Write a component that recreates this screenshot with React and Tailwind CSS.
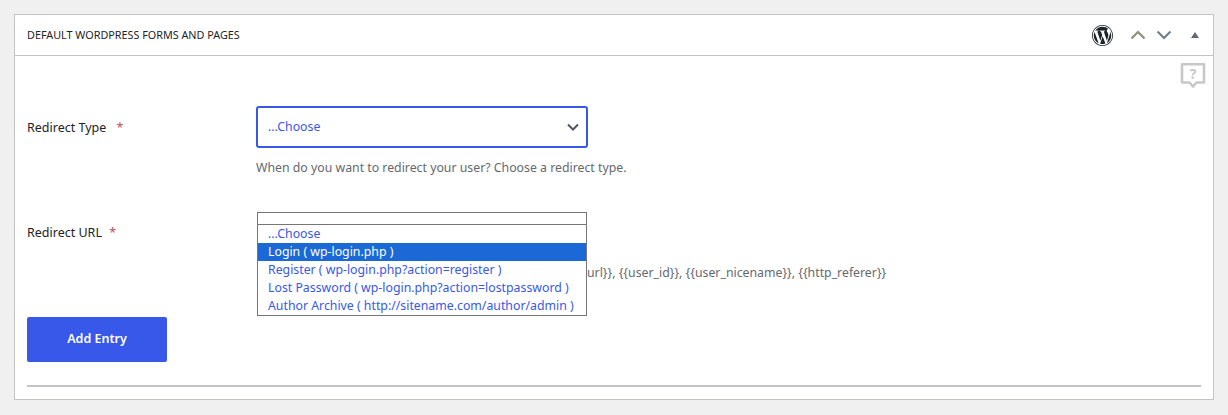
const options = [
  "...Choose",
  "Login ( wp-login.php )",
  "Register ( wp-login.php?action=register )",
  "Lost Password ( wp-login.php?action=lostpassword )",
  "Author Archive ( http://sitename.com/author/admin )",
];

function WpLogo() {
  return (
    <svg width="21" height="21" viewBox="0 0 24 24" fill="#1d2327">
      <path d="M12 0C5.4 0 0 5.4 0 12s5.4 12 12 12 12-5.4 12-12S18.6 0 12 0zm0 23.1C5.9 23.1.9 18.1.9 12S5.9.9 12 .9 23.1 5.9 23.1 12 18.1 23.1 12 23.1z" />
      <path d="M2 12c0 4 2.300 7.400 5.700 9L2.900 7.900C2.300 9.100 2 10.500 2 12zm16.700-.5c0-1.200-.4-2.100-.8-2.700-.5-.8-1-1.500-1-2.300 0-.9.7-1.800 1.700-1.800h.1C16.900 3 14.600 2 12 2 8.500 2 5.500 3.800 3.700 6.500h.6c1 0 2.700-.1 2.700-.1.500 0 .6.800.1.800 0 0-.5.1-1.100.1l3.600 10.600 2.100-6.400-1.500-4.200c-.5 0-1-.1-1-.1-.5 0-.5-.8 0-.8 0 0 1.600.1 2.600.1s2.700-.1 2.700-.1c.5 0 .6.800.1.800 0 0-.6.1-1.100.1l3.500 10.600 1-3.300c.4-1.300.7-2.200.7-3zM12.200 12.900l-2.900 8.500c.9.300 1.800.4 2.800.4 1.100 0 2.200-.2 3.300-.6l-.1-.1-3.100-8.200zm8.500-5.600c0 .3.100.7.100 1.100 0 1-.2 2.200-.8 3.600l-3 8.800c3-1.700 5-5 5-8.800 0-1.700-.5-3.300-1.300-4.700z" />
    </svg>
  );
}

function HelpBubble() {
  return (
    <svg width="26" height="26" viewBox="0 0 26 26" fill="none">
      <path d="M2 2.200h22v18.300h-7.500L13 24.500l-3.500-4H2z" stroke="#c8c8c8" strokeWidth="2.600" strokeLinejoin="round" />
      <text x="13" y="16.500" textAnchor="middle" fontSize="14" fontWeight="700" fontFamily="Noto Sans, sans-serif" fill="#c8c8c8">?</text>
    </svg>
  );
}

export default function App() {
  return (
    <div className="min-h-[415px] bg-[#f0f0f1] px-[14px] pt-[14px] font-['Noto_Sans',sans-serif] text-[#1d2327]">
      <div className="h-[386px] border border-[#c3c4c7] bg-white">
        <div className="flex h-[41px] items-center justify-between border-b border-[#c3c4c7] pl-3 pr-[14px]">
          <h2 className="text-[10.8px] leading-none">DEFAULT WORDPRESS FORMS AND PAGES</h2>
          <div className="flex items-center">
            <WpLogo />
            <svg className="ml-[17px]" width="16" height="10" viewBox="0 0 16 10" fill="none" stroke="#8c8f7a" strokeWidth="2.200">
              <path d="M1.500 8.500 8 2l6.500 6.500" />
            </svg>
            <svg className="ml-[10px]" width="16" height="10" viewBox="0 0 16 10" fill="none" stroke="#72808c" strokeWidth="2.200">
              <path d="M1.500 1.500 8 8l6.500-6.500" />
            </svg>
            <div className="ml-[19px] h-0 w-0 border-x-4 border-b-[6px] border-x-transparent border-b-[#646970]" />
          </div>
        </div>
        <div className="relative px-3">
          <div className="flex justify-end pt-[6px]">
            <div className="mr-[-5px]">
              <HelpBubble />
            </div>
          </div>
          <div className="mt-[18px] flex">
            <label className="mt-[13px] w-[229px] text-[12.5px] leading-[18px]">
              Redirect Type <span className="ml-[7px] text-[#b5545c]">*</span>
            </label>
            <div>
              <div className="flex h-[42px] w-[332px] items-center justify-between rounded-[3px] border-2 border-[#3858e9] pl-[10px] pr-[7px] text-[12.3px] text-[#3858e9]">
                <span>...Choose</span>
                <svg width="12" height="8" viewBox="0 0 12 8" fill="none" stroke="#50575e" strokeWidth="2">
                  <path d="M1 1.500l5 5 5-5" />
                </svg>
              </div>
              <p className="mt-[11px] text-[12.3px] leading-[18px] text-[#646970]">
                When do you want to redirect your user? Choose a redirect type.
              </p>
            </div>
          </div>
          <div className="mt-[35px] flex">
            <label className="mt-[12px] w-[229px] text-[12.5px] leading-[18px]">
              Redirect URL <span className="ml-1 text-[#b5545c]">*</span>
            </label>
            <div className="relative ml-px h-[105px] w-[330px]">
              <div className="h-[13px] border border-b-0 border-[#767676] bg-white" />
              <p className="absolute left-[330px] top-[52px] whitespace-nowrap text-[12.3px] leading-[18px] text-[#646970]">
                {"url}}, {{user_id}}, {{user_nicename}}, {{http_referer}}"}
              </p>
              <ul className="absolute left-0 top-[12px] z-10 w-[330px] border border-[#767676] bg-white text-[12.3px] leading-[18px] text-[#3858e9]">
                {options.map((o, i) => (
                  <li
                    key={o}
                    className={i === 1 ? "bg-[#1a69d6] pl-[10px] text-white" : i === 0 ? "h-[18px] pl-[10px]" : "pl-[10px]"}
                  >
                    {o}
                  </li>
                ))}
              </ul>
            </div>
          </div>
          <button className="h-[45px] w-[140px] rounded-[2px] bg-[#3858e9] text-[12.5px] font-semibold text-white">
            Add Entry
          </button>
          <hr className="mt-[23px] border-t-2 border-[#c3c4c7]" />
        </div>
      </div>
    </div>
  );
}
